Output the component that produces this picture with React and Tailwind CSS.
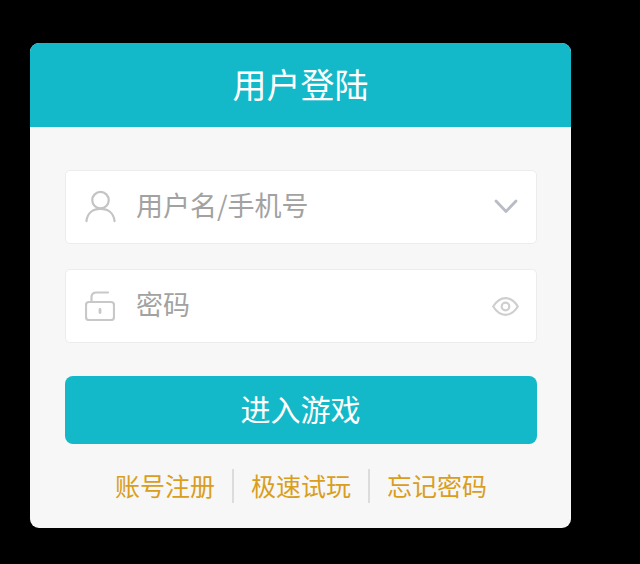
function UserIcon() {
  return (
    <svg className="mb-[2px]" width="31" height="33" viewBox="0 0 32 34" fill="none" stroke="#c4c4c4" strokeWidth="2.3" strokeLinecap="round">
      <circle cx="16" cy="10.5" r="8.5" />
      <path d="M1.5 32 C2.5 23.5 8.5 19.5 16 19.5 C23.5 19.5 29.5 23.5 30.5 32" />
    </svg>
  );
}

function LockIcon() {
  return (
    <svg width="30" height="30" viewBox="0 0 30 30" fill="none" stroke="#c8c8c8" strokeWidth="2.2" strokeLinecap="round">
      <rect x="1" y="11" width="28" height="18" rx="3" />
      <path d="M6.5 11 V6 C6.5 3 8.5 1.5 11.5 1.5 H23" />
      <path d="M15 18.5 V21.5" strokeWidth="2.8" />
    </svg>
  );
}

function ChevronIcon() {
  return (
    <svg className="mb-[2px]" width="24" height="15" viewBox="0 0 24 15" fill="none" stroke="#b9bcc6" strokeWidth="2.8" strokeLinecap="round" strokeLinejoin="round">
      <path d="M2 2 L12 12.5 L22 2" />
    </svg>
  );
}

function EyeIcon() {
  return (
    <svg width="27" height="19" viewBox="0 0 27 19" fill="none" stroke="#cfcfcf" strokeWidth="2.2">
      <path d="M1.2 9.5 C5 3.5 9 1.2 13.5 1.2 C18 1.2 22 3.5 25.8 9.5 C22 15.5 18 17.8 13.5 17.8 C9 17.8 5 15.5 1.2 9.5 Z" />
      <circle cx="13.5" cy="9.5" r="3.8" />
    </svg>
  );
}

function Field({ icon, label, right, className }) {
  return (
    <div className={"flex h-[74px] items-center rounded-[5px] border border-[#ececec] bg-white " + className}>
      <div className="flex w-[68px] shrink-0 justify-center">{icon}</div>
      <span className="flex-1 pb-[6px] pl-[2px] text-[27px] leading-none text-[#a2a2a2]">{label}</span>
      <div className="flex w-[60px] shrink-0 justify-center pr-[1px]">{right}</div>
    </div>
  );
}

export default function App() {
  return (
    <div className="h-[564px] w-[640px] overflow-hidden bg-black pl-[30px] pt-[43px] font-['Noto_Sans_CJK_SC','Liberation_Sans',sans-serif]">
      <div className="h-[485px] w-[541px] overflow-hidden rounded-[9px] bg-[#f7f7f7]">
        <div className="flex h-[84px] items-center justify-center bg-[#13b9c8] pb-[2px] text-[34px] leading-none text-white">
          用户登陆
        </div>
        <div className="pl-[35px] pr-[34px] pt-[43px]">
          <Field icon={<UserIcon />} label="用户名/手机号" right={<ChevronIcon />} />
          <Field icon={<LockIcon />} label="密码" right={<EyeIcon />} className="mt-[25px]" />
          <button className="mt-[33px] flex h-[68px] w-full items-center justify-center rounded-[8px] bg-[#13b9c8] pb-[4px] pr-[1px] text-[30px] leading-none text-white">
            进入游戏
          </button>
          <div className="mt-[25px] flex items-center justify-center text-[25px] leading-none text-[#d99e20]">
            <span className="pb-[2px]">账号注册</span>
            <span className="mx-[17px] h-[34px] w-[2px] bg-[#dcdcdc]" />
            <span className="pb-[2px]">极速试玩</span>
            <span className="mx-[17px] h-[34px] w-[2px] bg-[#dcdcdc]" />
            <span className="pb-[2px]">忘记密码</span>
          </div>
        </div>
      </div>
    </div>
  );
}
